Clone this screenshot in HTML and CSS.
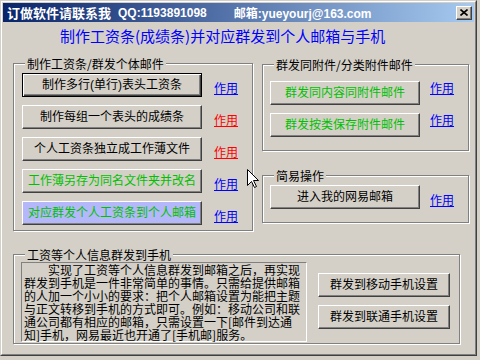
FILE: index.html
```html
<!DOCTYPE html>
<html lang="zh-CN">
<head>
<meta charset="utf-8">
<title>工资条</title>
<link rel="stylesheet" href="styles.css">
</head>
<body>
<div class="window">
  <div class="frame">
    <div class="titlebar">
      <span class="t-cn">订做软件请联系我</span>
      <span class="t-qq">QQ:1193891098</span>
      <span class="t-mail">邮箱:yueyourj@163.com</span>
      <span class="close"><svg width="8" height="7" viewBox="0 0 8 7"><path d="M0.5 0.5 L7.5 6.5 M7.5 0.5 L0.5 6.5" stroke="#000" stroke-width="1.6" fill="none"/></svg></span>
    </div>
    <div class="client">
      <h1 class="heading">制作工资条(成绩条)并对应群发到个人邮箱与手机</h1>
      <div class="top-row">
        <div class="group g1">
          <div class="group-title">制作工资条/群发个体邮件</div>
          <div class="g1-rows">
            <div class="row"><button class="btn btn-wide default">制作多行(单行)表头工资条</button><a class="link link-mid">作用</a></div>
            <div class="row"><button class="btn btn-wide">制作每组一个表头的成绩条</button><a class="link link-mid red">作用</a></div>
            <div class="row"><button class="btn btn-wide">个人工资条独立成工作薄文件</button><a class="link link-mid red">作用</a></div>
            <div class="row"><button class="btn btn-wide green">工作薄另存为同名文件夹并改名</button><a class="link link-mid">作用</a></div>
            <div class="row"><button class="btn btn-wide green lavender">对应群发个人工资条到个人邮箱</button><a class="link link-mid">作用</a></div>
          </div>
        </div>
        <div class="right-col">
          <div class="group g2">
            <div class="group-title">群发同附件/分类附件邮件</div>
            <div class="g2-rows">
              <div class="row row-top"><button class="btn btn-mid green">群发同内容同附件邮件</button><a class="link link-top">作用</a></div>
              <div class="row row-top"><button class="btn btn-mid green">群发按类保存附件邮件</button><a class="link link-top">作用</a></div>
            </div>
          </div>
          <div class="group g3">
            <div class="group-title">简易操作</div>
            <div class="g3-rows">
              <div class="row"><button class="btn btn-mid">进入我的网易邮箱</button><a class="link link-mid link-g3">作用</a></div>
            </div>
          </div>
        </div>
      </div>
      <div class="group g4">
        <div class="group-title">工资等个人信息群发到手机</div>
        <div class="g4-body">
          <div class="memo">
            <span class="line">　　实现了工资等个人信息群发到邮箱之后，再实现</span>
            <span class="line">群发到手机是一件非常简单的事情。只需给提供邮箱</span>
            <span class="line">的人加一个小小的要求：把个人邮箱设置为能把主题</span>
            <span class="line">与正文转移到手机的方式即可。例如：移动公司和联</span>
            <span class="line">通公司都有相应的邮箱，只需设置一下[邮件到达通</span>
            <span class="line">知]手机，网易最近也开通了[手机邮]服务。</span>
          </div>
          <div class="g4-btns">
            <button class="btn btn-phone">群发到移动手机设置</button>
            <button class="btn btn-phone">群发到联通手机设置</button>
          </div>
        </div>
      </div>
    </div>
  </div>
  <svg class="cursor" width="12" height="20" viewBox="0 0 12 20"><path d="M0.5 0.5 L0.5 16.5 L4.5 12.5 L7.5 18.5 L9.5 17.5 L6.5 11.5 L11.5 11.5 Z" fill="#fff" stroke="#000" stroke-width="1"/></svg>
</div>
</body>
</html>
```
FILE: styles.css
```css
* { box-sizing: border-box; }

body {
  margin: 0;
  background: #d4d0c8;
  font-family: "Noto Sans CJK SC", sans-serif;
  font-size: 12px;
  color: #000;
}

.window {
  position: relative;
  width: 477px;
  height: 356px;
  border: 1px solid;
  border-color: #d4d0c8 #404040 #404040 #d4d0c8;
}

.frame {
  height: 100%;
  border: 1px solid;
  border-color: #fff #808080 #808080 #fff;
  padding: 1px;
  display: flex;
  flex-direction: column;
}

.titlebar {
  height: 19px;
  flex: none;
  background: linear-gradient(to right, #0a246a, #a6caf0);
  color: #fff;
  font-weight: bold;
  display: flex;
  align-items: center;
  padding-left: 4px;
  white-space: nowrap;
}

.t-cn { font-size: 13px; line-height: 15px; }
.t-qq { margin-left: 7px; font-family: "Liberation Sans", sans-serif; font-size: 12px; }
.t-mail { margin-left: 27px; font-family: "Liberation Sans", "Noto Sans CJK SC", sans-serif; font-size: 12px; }

.close {
  margin-left: auto;
  margin-right: 2px;
  width: 16px;
  height: 14px;
  background: #d4d0c8;
  border: 1px solid;
  border-color: #fff #404040 #404040 #fff;
  box-shadow: inset -1px -1px #808080;
  display: flex;
  align-items: center;
  justify-content: center;
}
.close svg { display: block; }

.client {
  flex: 1;
  padding: 5px 0 0 10px;
}

.heading {
  margin: 0 0 0 47px;
  font-size: 15px;
  line-height: 18px;
  font-weight: normal;
  color: #0000ff;
  white-space: nowrap;
}

.top-row {
  display: flex;
  align-items: flex-start;
  margin-top: 18px;
}

.group {
  border: 1px solid #808080;
  box-shadow: inset 1px 1px #fff, 1px 1px #fff;
}

.group-title {
  margin: -7px 0 0 11px;
  padding: 0 2px;
  width: fit-content;
  background: #d4d0c8;
  line-height: 13px;
  white-space: nowrap;
}

.g1 { width: 240px; height: 168px; }
.g1-rows {
  display: flex;
  flex-direction: column;
  gap: 8px;
  padding: 3px 0 0 8px;
}

.row { display: flex; align-items: center; }
.row-top { align-items: flex-start; }

.btn {
  height: 24px;
  padding: 0;
  margin: 0;
  font-family: "Liberation Sans", "Noto Sans CJK SC", sans-serif;
  font-size: 12px;
  line-height: 14px;
  color: #000;
  background: #d4d0c8;
  border: 1px solid;
  border-color: #fff #404040 #404040 #fff;
  box-shadow: inset -1px -1px #808080;
  white-space: nowrap;
  text-align: center;
}
.btn.default {
  border-color: #000;
  box-shadow: inset 1px 1px #fff, inset -1px -1px #404040, inset -2px -2px #808080;
}
.btn-wide { width: 180px; }
.btn-mid { width: 150px; }
.btn-phone { width: 132px; }
.green { color: #00c000; }
.lavender { background: #b4b8fa; }

.link {
  color: #0000ff;
  text-decoration: underline;
  line-height: 13px;
  white-space: nowrap;
}
.link.red { color: #ff0000; }
.link-mid { margin-left: 12px; margin-top: 5px; }
.link-top { margin-left: 10px; }

.right-col {
  margin-left: 9px;
  margin-top: 1px;
  width: 207px;
  display: flex;
  flex-direction: column;
}

.g2 { height: 87px; }
.g2-rows {
  display: flex;
  flex-direction: column;
  gap: 8px;
  padding: 10px 0 0 7px;
}

.g3 { height: 48px; margin-top: 24px; }
.g3-rows { padding: 3px 0 0 7px; }
.link-g3 { margin-left: 10px; }

.g4 {
  width: 447px;
  height: 90px;
  margin-top: 23px;
}

.g4-body {
  display: flex;
  align-items: flex-start;
  padding: 1px 0 0 7px;
}

.memo {
  width: 286px;
  height: 80px;
  border: 1px solid;
  border-color: #808080 #fff #fff #808080;
  padding: 0 0 0 2px;
  line-height: 13px;
}
.line { display: block; white-space: nowrap; }

.g4-btns {
  display: flex;
  flex-direction: column;
  gap: 8px;
  margin: 11px 0 0 11px;
}

.cursor {
  position: absolute;
  left: 246px;
  top: 168px;
}
```
